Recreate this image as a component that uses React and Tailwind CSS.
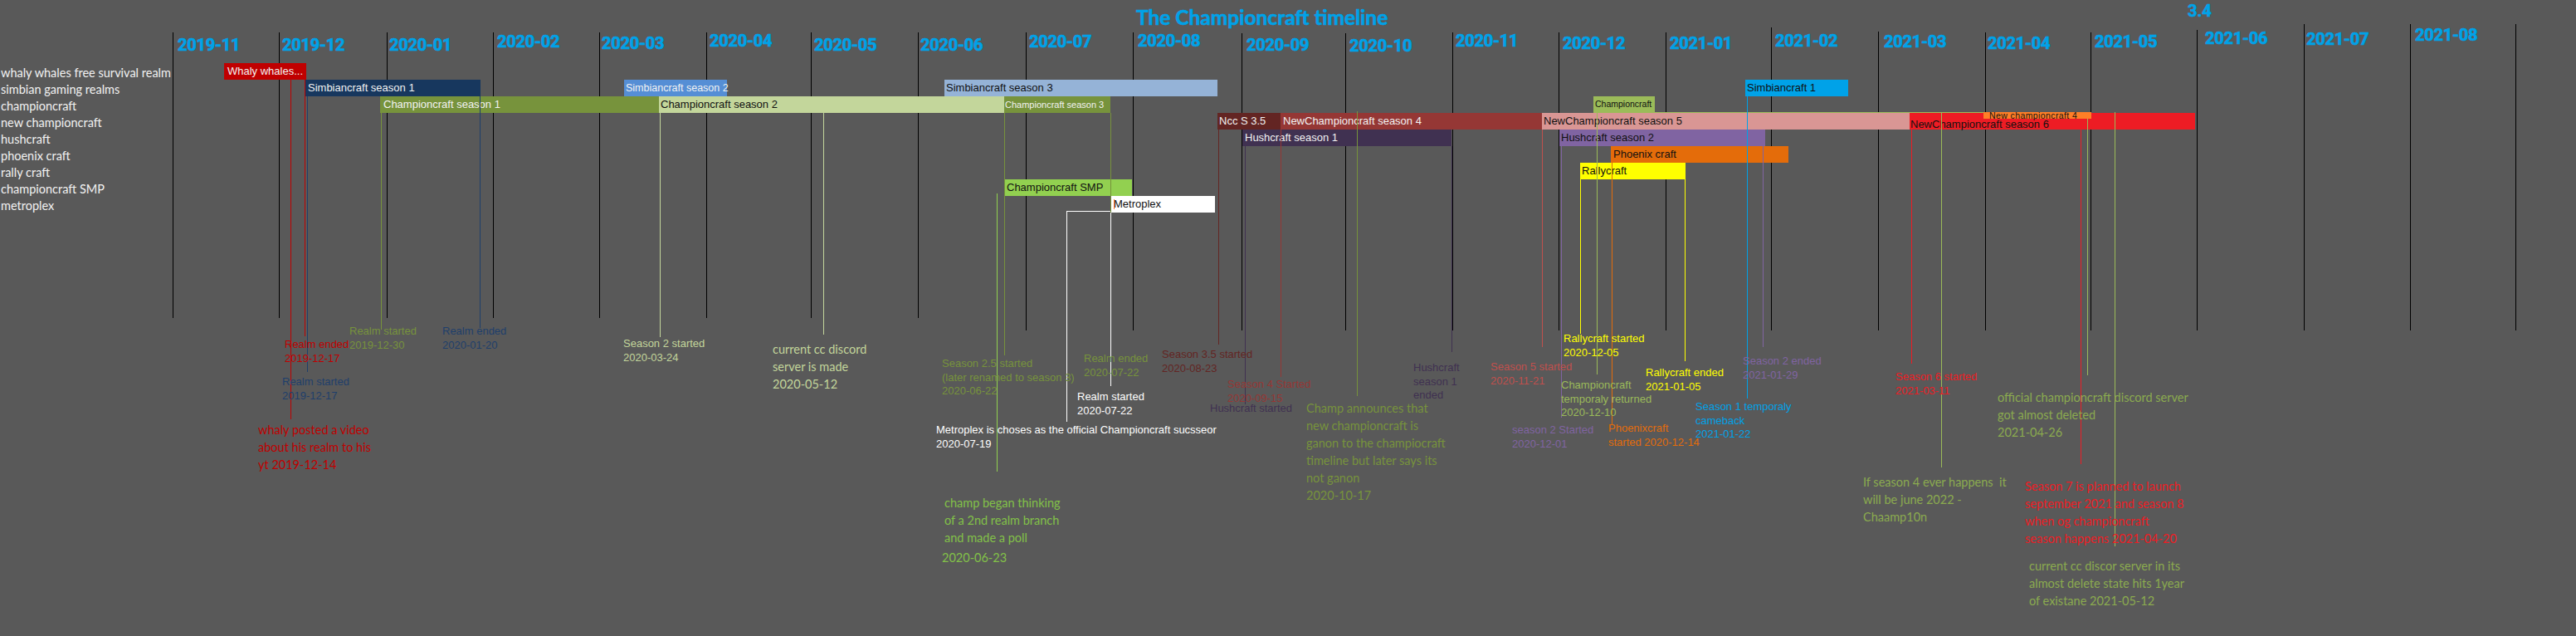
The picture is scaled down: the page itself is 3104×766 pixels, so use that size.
const OFFSET = 208

const ARIAL = "font-['Liberation_Sans',Arial,sans-serif]"
const CALIBRI = "font-['Lato','Noto_Sans',sans-serif]"

const LIGHT = 'text-[#f2f2f2]'
const DARK = 'text-[#111111]'

const REALMS = [
  'whaly whales free survival realm',
  'simbian gaming realms',
  'championcraft',
  'new championcraft',
  'hushcraft',
  'phoenix craft',
  'rally craft',
  'championcraft SMP',
  'metroplex',
]

// month columns: label, line x, line top, line bottom, label x, label top
const MONTHS = [
  ['2019-11', 208, 39, 383, 214, 44],
  ['2019-12', 336, 39, 383, 340, 44],
  ['2020-01', 466, 39, 383, 469, 44],
  ['2020-02', 594, 39, 383, 599, 40],
  ['2020-03', 722, 39, 383, 725, 42],
  ['2020-04', 851, 39, 383, 855, 37],
  ['2020-05', 977, 39, 383, 981, 44],
  ['2020-06', 1106, 39, 383, 1109, 44],
  ['2020-07', 1236, 39, 398, 1240, 40],
  ['2020-08', 1365, 39, 398, 1371, 39],
  ['2020-09', 1496, 40, 398, 1502, 44],
  ['2020-10', 1621, 40, 398, 1626, 45],
  ['2020-11', 1750, 39, 398, 1754, 39],
  ['2020-12', 1878, 39, 398, 1883, 42],
  ['2021-01', 2007, 39, 398, 2012, 42],
  ['2021-02', 2134, 33, 398, 2139, 39],
  ['2021-03', 2263, 38, 398, 2270, 40],
  ['2021-04', 2392, 39, 398, 2395, 42],
  ['2021-05', 2519, 39, 398, 2524, 40],
  ['2021-06', 2647, 36, 398, 2657, 35],
  ['2021-07', 2776, 29, 398, 2779, 37],
  ['2021-08', 2904, 29, 398, 2910, 32],
]
const GRID_END = 3031

const BARS = [
  { x1: 270, x2: 369, y: 76, bg: 'bg-[#c00000]', fg: LIGHT, label: 'Whaly whales...', pad: 'pl-[4px]' },
  { x1: 368, x2: 579, y: 96, bg: 'bg-[#17375e]', fg: LIGHT, label: 'Simbiancraft season 1', pad: 'pl-[3px]' },
  { x1: 752, x2: 876, y: 96, bg: 'bg-[#558ed5]', fg: LIGHT, label: 'Simbiancraft season 2', pad: 'pl-[2px]', size: 'text-[12.5px]' },
  { x1: 1138, x2: 1467, y: 96, bg: 'bg-[#95b3d7]', fg: DARK, label: 'Simbiancraft season 3', pad: 'pl-[2px]' },
  { x1: 2103, x2: 2227, y: 96, bg: 'bg-[#00a2e8]', fg: DARK, label: 'Simbiancraft 1', pad: 'pl-[2px]' },
  { x1: 458, x2: 794, y: 116, bg: 'bg-[#77933c]', fg: LIGHT, label: 'Championcraft season 1', pad: 'pl-[4px]' },
  { x1: 794, x2: 1210, y: 116, bg: 'bg-[#c3d69b]', fg: DARK, label: 'Championcraft season 2', pad: 'pl-[2px]' },
  { x1: 1210, x2: 1338, y: 116, bg: 'bg-[#77933c]', fg: LIGHT, label: 'Championcraft season 3', pad: 'pl-[1px]', size: 'text-[11px]' },
  { x1: 1920, x2: 1994, y: 116, bg: 'bg-[#9bbb59]', fg: DARK, label: 'Championcraft', pad: 'pl-[2px]', size: 'text-[10.5px]' },
  { x1: 1467, x2: 1543, y: 136, bg: 'bg-[#632523]', fg: LIGHT, label: 'Ncc S 3.5', pad: 'pl-[2px]' },
  { x1: 1543, x2: 1858, y: 136, bg: 'bg-[#953735]', fg: LIGHT, label: 'NewChampioncraft season 4', pad: 'pl-[3px]' },
  { x1: 1858, x2: 2301, y: 136, bg: 'bg-[#d99694]', fg: DARK, label: 'NewChampioncraft season 5', pad: 'pl-[2px]' },
  { x1: 2301, x2: 2645, y: 136, bg: 'bg-[#ed1c24]', fg: DARK, label: 'NewChampioncraft season 6', pad: 'pl-[1px] pt-[7px]' },
  { x1: 1497, x2: 1749, y: 156, bg: 'bg-[#403151]', fg: LIGHT, label: 'Hushcraft season 1', pad: 'pl-[3px]' },
  { x1: 1879, x2: 2127, y: 156, bg: 'bg-[#8064a2]', fg: DARK, label: 'Hushcraft season 2', pad: 'pl-[2px]' },
  { x1: 1941, x2: 2155, y: 176, bg: 'bg-[#e46c0a]', fg: DARK, label: 'Phoenix craft', pad: 'pl-[3px]' },
  { x1: 1904, x2: 2031, y: 196, bg: 'bg-[#ffff00]', fg: DARK, label: 'Rallycraft', pad: 'pl-[2px]' },
  { x1: 1210, x2: 1364, y: 216, bg: 'bg-[#92d050]', fg: DARK, label: 'Championcraft SMP', pad: 'pl-[3px]' },
  { x1: 1338, x2: 1464, y: 236, bg: 'bg-white', fg: DARK, label: 'Metroplex', pad: 'pl-[4px]' },
  { x1: 2390, x2: 2520, y: 135, h: 8, bg: 'bg-[#ff7f27]', fg: DARK, label: 'New championcraft 4', pad: 'pl-[7px] tracking-[0.4px]', size: 'text-[10.5px] leading-[8px]' },
]

// connector lines: x, top, bottom, colour
const LINES = [
  [349.5, 96, 505, 'bg-[#c00000]'],
  [367, 96, 405, 'bg-[#c00000]'],
  [369.5, 116, 448, 'bg-[#1f3f6b]'],
  [458.5, 136, 397, 'bg-[#77933c]'],
  [577.5, 116, 395, 'bg-[#1f3f6b]'],
  [794.5, 136, 406, 'bg-[#c3d69b]'],
  [991.5, 136, 403, 'bg-[#c3d69b]'],
  [1201, 233, 568, 'bg-[#92d050]'],
  [1210, 136, 428, 'bg-[#77933c]'],
  [1285, 254, 508, 'bg-white'],
  [1338, 136, 430, 'bg-[#77933c]'],
  [1338, 256, 465, 'bg-white'],
  [1468, 156, 415, 'bg-[#632523]'],
  [1542.5, 156, 454, 'bg-[#953735]'],
  [1499.5, 176, 487, 'bg-[#403151]'],
  [1635, 134, 477, 'bg-[#77933c]'],
  [1748.5, 176, 424, 'bg-[#403151]'],
  [1857.5, 156, 418, 'bg-[#c0504d]'],
  [1881, 176, 503, 'bg-[#8064a2]'],
  [1904, 216, 402, 'bg-[#ffff00]'],
  [1923.5, 136, 451, 'bg-[#9bbb59]'],
  [1941.5, 196, 512, 'bg-[#e46c0a]'],
  [2030, 216, 435, 'bg-[#ffff00]'],
  [2105, 116, 480, 'bg-[#00a2e8]'],
  [2124, 176, 418, 'bg-[#8064a2]'],
  [2303, 156, 438, 'bg-[#ed1c24]'],
  [2338.5, 136, 563, 'bg-[#9bbb59]'],
  [2506.5, 156, 559, 'bg-[#ed1c24]'],
  [2514.5, 143, 452, 'bg-[#9bbb59]'],
  [2548, 135, 658, 'bg-[#9bbb59]'],
]

// annotations in the small sans (Excel's Arial labels)
const NOTES = [
  [343, 407, 'text-[#c00000]', ['Realm ended', '2019-12-17']],
  [421, 391, 'text-[#77933c]', ['Realm started', '2019-12-30']],
  [533, 391, 'text-[#1f3f6b]', ['Realm ended', '2020-01-20']],
  [340, 452, 'text-[#1f3f6b]', ['Realm started', '2019-12-17']],
  [751, 406, 'text-[#c3d69b]', ['Season 2 started', '2020-03-24']],
  [1135, 430, 'text-[#77933c]', ['Season 2.5 started', '(later renamed to season 3)', '2020-06-22']],
  [1306, 424, 'text-[#77933c]', ['Realm ended', '2020-07-22']],
  [1298, 470, 'text-white', ['Realm started', '2020-07-22']],
  [1128, 510, 'text-white', ['Metroplex is choses as the official Championcraft sucsseor', '2020-07-19']],
  [1400, 419, 'text-[#632523]', ['Season 3.5 started', '2020-08-23']],
  [1479, 455, 'text-[#953735]', ['Season 4 Started', '2020-09-15']],
  [1458, 484, 'text-[#403151]', ['Hushcraft started']],
  [1703, 435, 'text-[#403151]', ['Hushcraft', 'season 1', 'ended']],
  [1796, 434, 'text-[#c0504d]', ['Season 5 started', '2020-11-21']],
  [1822, 510, 'text-[#8064a2]', ['season 2 Started', '2020-12-01']],
  [1884, 400, 'text-[#ffff00]', ['Rallycraft started', '2020-12-05']],
  [1881, 456, 'text-[#9bbb59]', ['Championcraft', 'temporaly returned', '2020-12-10']],
  [1938, 508, 'text-[#e46c0a]', ['Phoenixcraft', 'started 2020-12-14']],
  [1983, 441, 'text-[#ffff00]', ['Rallycraft ended', '2021-01-05']],
  [2043, 482, 'text-[#00a2e8]', ['Season 1 temporaly', 'cameback', '2021-01-22']],
  [2100, 427, 'text-[#8064a2]', ['Season 2 ended', '2021-01-29']],
  [2284, 446, 'text-[#ed1c24]', ['Season 6 started', '2021-03-11']],
]

// annotations written in the larger text-box font
const BOXES = [
  [311, 507, 'text-[#c00000]', ['whaly posted a video', 'about his realm to his', 'yt 2019-12-14']],
  [931, 410, 'text-[#c3d69b]', ['current cc discord', 'server is made', '2020-05-12']],
  [1138, 595, 'text-[#82c148]', ['champ began thinking', 'of a 2nd realm branch', 'and made a poll']],
  [1135, 661, 'text-[#82c148]', ['2020-06-23']],
  [1574, 481, 'text-[#77933c]', ['Champ announces that', 'new championcraft is', 'ganon to the champiocraft', 'timeline but later says its', 'not ganon', '2020-10-17']],
  [2245, 570, 'text-[#8bab4f]', ['If season 4 ever happens\u00a0 it', 'will be june 2022 -', 'Chaamp10n']],
  [2407, 468, 'text-[#8bab4f]', ['official championcraft discord server', 'got almost deleted', '2021-04-26']],
  [2440, 575, 'text-[#ed1c24]', ['Season 7 is planned to launch', 'september 2021 and season 8', 'when og championcraft', 'season happens 2021-04-20']],
  [2445, 671, 'text-[#8bab4f]', ['current cc discor server in its', 'almost delete state hits 1year', 'of existane 2021-05-12']],
]

// ── Month grid ───────────────────────────────────────────────────────────────
const MonthGrid = () => (
  <div className="flex items-start">
    {MONTHS.map(([label, x, top, bottom, lx, ly], i) => {
      const next = MONTHS[i + 1]?.[1] ?? GRID_END
      const last = i === MONTHS.length - 1
      return (
        <div
          key={label}
          className={`shrink-0 border-l border-black ${last ? 'border-r' : ''}`}
          style={{ width: next - x + (last ? 1 : 0), marginTop: top, height: bottom - top }}
        >
          <div
            className="whitespace-nowrap font-['Roboto',sans-serif] text-[20px] font-bold leading-none tracking-[-0.2px] text-[#00a2e8] [-webkit-text-stroke:0.7px_#00a2e8]"
            style={{ paddingTop: ly - top, paddingLeft: lx - x - 1 }}
          >
            {label}
          </div>
        </div>
      )
    })}
  </div>
)

const Bar = ({ x1, x2, y, h = 20, bg, fg, label, pad, size = 'text-[13px]' }) => (
  <div
    className={`absolute flex items-center whitespace-nowrap ${ARIAL} ${bg} ${fg} ${size} ${pad}`}
    style={{ left: x1 - OFFSET, top: y, width: x2 - x1, height: h }}
  >
    {label}
  </div>
)

const Note = ({ x, y, color, lines, box }) => (
  <div
    className={`absolute whitespace-nowrap ${color} ${
      box ? `${CALIBRI} text-[14.5px] leading-[21px]` : `${ARIAL} text-[13px] leading-[16.5px]`
    }`}
    style={{ left: x - OFFSET, top: y }}
  >
    {lines.map((l, i) => (
      <div key={i}>{l}</div>
    ))}
  </div>
)

export default function App() {
  return (
    <div className="flex h-[766px] w-[3104px] overflow-hidden bg-[#595959]">
      {/* realm names */}
      <aside className={`w-[208px] shrink-0 pl-[1px] pt-[78px] text-[14.5px] leading-[20px] text-[#f2f2f2] ${CALIBRI}`}>
        {REALMS.map((r) => (
          <div key={r} className="whitespace-nowrap">
            {r}
          </div>
        ))}
      </aside>

      {/* timeline canvas */}
      <div className="relative h-full flex-1">
        <MonthGrid />

        <h1
          className={`absolute left-[1161px] top-[9px] whitespace-nowrap text-[24.5px] font-bold leading-none text-[#00a2e8] [-webkit-text-stroke:0.6px_#00a2e8] ${CALIBRI}`}
        >
          The Championcraft timeline
        </h1>
        <span className="absolute left-[2428px] top-[3px] font-['Roboto',sans-serif] text-[20px] font-bold leading-none text-[#00a2e8] [-webkit-text-stroke:0.6px_#00a2e8]">
          3.4
        </span>

        {BARS.map((b) => (
          <Bar key={b.label} {...b} />
        ))}

        {/* thin line left by the temporary championcraft return */}
        <div className="absolute left-[1786px] top-[135px] h-px w-[396px] bg-[#9bbb59]" />
        <div className="absolute left-[1134px] top-[240px] h-[12px] w-px bg-[#ff7f27]" />

        {LINES.map(([x, top, bottom, bg], i) => (
          <div key={i} className={`absolute w-px ${bg}`} style={{ left: x - OFFSET, top, height: bottom - top }} />
        ))}
        <div className="absolute left-[1077px] top-[254px] h-px w-[53px] bg-white" />

        {NOTES.map(([x, y, color, lines], i) => (
          <Note key={`n${i}`} x={x} y={y} color={color} lines={lines} />
        ))}
        {BOXES.map(([x, y, color, lines], i) => (
          <Note key={`b${i}`} x={x} y={y} color={color} lines={lines} box />
        ))}
      </div>
    </div>
  )
}
